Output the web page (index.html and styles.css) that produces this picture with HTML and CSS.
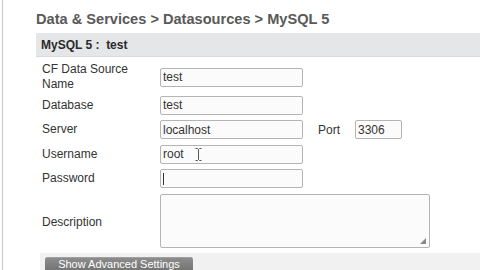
FILE: index.html
```html
<!DOCTYPE html>
<html>
<head>
<meta charset="utf-8">
<link rel="stylesheet" href="styles.css">
</head>
<body>
<div class="page">
  <div class="content">
    <h1 class="crumbs">Data &amp; Services &gt; Datasources &gt; MySQL 5</h1>
    <div class="bar">MySQL 5 :&nbsp; test</div>
    <div class="form">
      <div class="row row-tall">
        <div class="label label-two">CF Data Source<br>Name</div>
        <div class="field"><input class="input" type="text" value="test"></div>
      </div>
      <div class="row">
        <div class="label">Database</div>
        <div class="field"><input class="input" type="text" value="test"></div>
      </div>
      <div class="row">
        <div class="label">Server</div>
        <div class="field"><input class="input" type="text" value="localhost"></div>
        <div class="port-label">Port</div>
        <input class="input port" type="text" value="3306">
      </div>
      <div class="row">
        <div class="label">Username</div>
        <div class="field">
          <input class="input" type="text" value="root">
          <svg class="ibeam" width="7" height="13" viewBox="0 0 7 13"><path d="M0.5 0.5h2l1 1 1-1h2M3.5 1.5v10M0.5 12.5h2l1-1 1 1h2" fill="none" stroke="#555" stroke-width="1"/></svg>
        </div>
      </div>
      <div class="row">
        <div class="label">Password</div>
        <div class="field">
          <input class="input" type="password" value="">
          <span class="caret"></span>
        </div>
      </div>
      <div class="row row-area">
        <div class="label label-desc">Description</div>
        <div class="field area-wrap"><textarea class="area"></textarea></div>
      </div>
    </div>
    <div class="footer">
      <button class="btn" type="button">Show Advanced Settings</button>
    </div>
  </div>
</div>
</body>
</html>
```
FILE: styles.css
```css
html, body {
  margin: 0;
  padding: 0;
  background: #fff;
  overflow: hidden;
}
body {
  font-family: "Liberation Sans", Arial, sans-serif;
  color: #333;
  width: 480px;
  height: 270px;
}
.page {
  height: 270px;
  margin-left: 2px;
  border-left: 1px solid #c8c8c8;
  padding-left: 33px;
  box-sizing: border-box;
}
.content {
  padding-top: 10px;
}
.crumbs {
  margin: 0;
  font-size: 14.6px;
  line-height: 19px;
  font-weight: bold;
  color: #595959;
  height: 23px;
}
.bar {
  height: 24px;
  line-height: 25px;
  background: #e4e6e8;
  border-bottom: 1px solid #d7d9db;
  box-sizing: border-box;
  padding-left: 5px;
  font-size: 12px;
  font-weight: bold;
  color: #2a2a2a;
}
.form {
  padding-top: 7px;
  padding-left: 6px;
  display: flex;
  flex-direction: column;
  gap: 5.5px;
}
.row {
  display: flex;
  align-items: center;
  height: 19px;
}
.row-tall {
  height: 26px;
}
.row-area {
  height: 54px;
}
.label {
  width: 118px;
  font-size: 12px;
  line-height: 13px;
  color: #333;
}
.label-two {
  line-height: 15px;
}
.label-desc {
  padding-top: 3px;
}
.field {
  position: relative;
  display: flex;
}
.input {
  width: 143px;
  height: 19px;
  box-sizing: border-box;
  border: 1px solid #b4b4b4;
  border-radius: 2px;
  background: #fbfbfb;
  padding: 0 2px;
  margin: 0;
  font-family: "Liberation Sans", Arial, sans-serif;
  font-size: 12px;
  color: #333;
  outline: none;
}
.port-label {
  margin-left: 15px;
  width: 37px;
  font-size: 12px;
  color: #333;
}
.port {
  width: 47px;
}
.ibeam {
  position: absolute;
  left: 35px;
  top: 3px;
}
.caret {
  position: absolute;
  left: 3px;
  top: 4px;
  width: 1px;
  height: 12px;
  background: #333;
}
.area-wrap {
  position: relative;
}
.area {
  width: 270px;
  height: 54px;
  box-sizing: border-box;
  border: 1px solid #b4b4b4;
  border-radius: 2px;
  background: #fbfbfb;
  margin: 0;
  resize: none;
  outline: none;
  display: block;
}
.area-wrap::after {
  content: "";
  position: absolute;
  right: 4px;
  bottom: 4px;
  width: 0;
  height: 0;
  border-left: 6px solid transparent;
  border-bottom: 6px solid #8a8a8a;
}
.footer {
  margin-top: 5px;
  margin-left: 4px;
  height: 20px;
  background: #f1f1f1;
  padding-left: 5px;
  padding-top: 4px;
  box-sizing: border-box;
  overflow: hidden;
}
.btn {
  width: 148px;
  height: 14px;
  box-sizing: border-box;
  border: none;
  border-radius: 3px 3px 0 0;
  background: linear-gradient(#8e8e8e, #737373);
  color: #fff;
  font-family: "Liberation Sans", Arial, sans-serif;
  font-size: 11px;
  padding: 1px 0 0 0;
  line-height: 12px;
  display: block;
  text-align: center;
  box-shadow: inset 0 1px 0 #a0a0a0;
}
```
